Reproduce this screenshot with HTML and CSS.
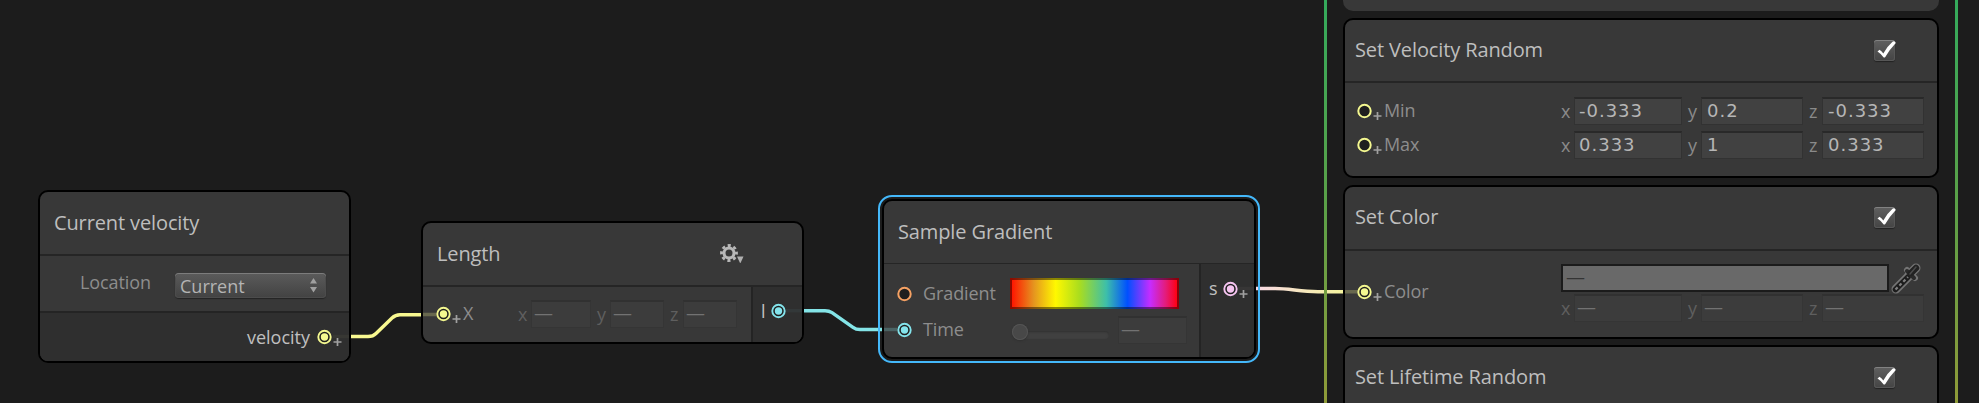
FILE: index.html
```
<!DOCTYPE html>
<html lang="en">
<head>
<meta charset="utf-8">
<title>VFX Graph</title>
<link rel="stylesheet" href="styles.css">
</head>
<body>
<svg class="defs" width="0" height="0">
  <defs>
    <symbol id="ring" viewBox="0 0 15 20"><circle cx="7.5" cy="10" r="6.2" fill="#1f1f1f" stroke="currentColor" stroke-width="2"/></symbol>
    <symbol id="ring-on" viewBox="0 0 15 20"><circle cx="7.5" cy="10" r="6.2" fill="#1f1f1f" stroke="currentColor" stroke-width="1.9"/><circle cx="7.5" cy="10" r="3.7" fill="currentColor"/></symbol>
    <symbol id="plus" viewBox="0 0 9 20"><path d="M0.5 15H8.5M4.5 11V19" stroke="#a0a0a0" stroke-width="1.7"/></symbol>
    <symbol id="check" viewBox="0 0 24 24"><path d="M3.500 11.500L5.500 9.800Q8 11.600 9.300 13.500Q13 6.500 18.500 1.700Q21 .6 21.800 3Q16 9 11.300 17Q10.300 18 9.200 17Q7 13.800 3.500 11.500Z" fill="#fff"/></symbol>
  </defs>
</svg>

<main class="canvas">
  <svg class="edges" width="1979" height="403" fill="none" stroke-width="3.4">
    <defs>
      <linearGradient id="mix" gradientUnits="userSpaceOnUse" x1="1256" y1="0" x2="1345" y2="0">
        <stop offset="0" stop-color="#f8d8e4"/><stop offset="1" stop-color="#f4f49c"/>
      </linearGradient>
    </defs>
    <path stroke="#f8f890" d="M350 336.5H368Q373 336.5 376 333.5L392 318Q395.500 314.700 400 314.700H422"/>
    <path stroke="#84e4e7" d="M803 310.700H825Q829 310.700 832 312.700L853 327.300Q856 329.500 860 329.500H882"/>
    <path stroke="url(#mix)" d="M1255 288.500H1275C1290 288.500 1300 291.700 1318 291.700H1344"/>
  </svg>

  <section class="node velocity">
    <h2>Current velocity</h2>
    <div class="row setting">
      <span class="label">Location</span>
      <div class="select">Current
        <svg width="9" height="15" viewBox="0 0 9 15"><path d="M4.500 0L8 5.500H1ZM1 9H8L4.500 14.500Z" fill="#a0a0a0"/></svg>
      </div>
    </div>
    <div class="row output wide">
      <span>velocity</span>
      <span class="port yellow"><svg class="ring"><use href="#ring-on"/></svg><svg class="plus"><use href="#plus"/></svg></span>
    </div>
  </section>

  <section class="node length">
    <h2>Length
      <svg class="gear" width="24" height="20" viewBox="0 0 24 20">
        <circle cx="9" cy="9" r="5" fill="none" stroke="#b8b8b8" stroke-width="3"/>
        <circle cx="9" cy="9" r="7.500" fill="none" stroke="#b8b8b8" stroke-width="2.800" stroke-dasharray="3.100 2.790" stroke-dashoffset="1.550"/>
        <path d="M17 12.500H23.500L20.500 19H20Z" fill="#b0b0b0"/>
      </svg>
    </h2>
    <div class="body">
      <div class="inputs row">
        <span class="port yellow"><svg class="ring"><use href="#ring-on"/></svg><svg class="plus"><use href="#plus"/></svg></span>
        <span class="label grow">X</span>
        <div class="vector small off"><i>x</i><b>—</b><i>y</i><b>—</b><i>z</i><b>—</b></div>
      </div>
      <div class="output row">
        <span>l</span>
        <span class="port cyan"><svg class="ring"><use href="#ring-on"/></svg></span>
      </div>
    </div>
  </section>

  <section class="node gradient selected">
    <h2>Sample Gradient</h2>
    <div class="body">
      <div class="inputs">
        <div class="row first">
          <span class="port orange"><svg class="ring"><use href="#ring"/></svg></span>
          <span class="label grow">Gradient</span>
          <div class="ramp"></div>
        </div>
        <div class="row second">
          <span class="port cyan"><svg class="ring"><use href="#ring-on"/></svg></span>
          <span class="label grow">Time</span>
          <div class="slider"><div class="track"></div><div class="knob"></div></div>
          <div class="vector off single"><b>—</b></div>
        </div>
      </div>
      <div class="output row">
        <span>s</span>
        <span class="port pink"><svg class="ring"><use href="#ring-on"/></svg><svg class="plus"><use href="#plus"/></svg></span>
      </div>
    </div>
  </section>

  <section class="context">
    <div class="block previous"></div>
    <div class="block random">
      <h2>Set Velocity Random<span class="check"><svg width="24" height="24"><use href="#check"/></svg></span></h2>
      <div class="row">
        <span class="port yellow"><svg class="ring"><use href="#ring"/></svg><svg class="plus"><use href="#plus"/></svg></span>
        <span class="label grow">Min</span>
        <div class="vector"><i>x</i><b>-0.333</b><i>y</i><b>0.2</b><i>z</i><b>-0.333</b></div>
      </div>
      <div class="row">
        <span class="port yellow"><svg class="ring"><use href="#ring"/></svg><svg class="plus"><use href="#plus"/></svg></span>
        <span class="label grow">Max</span>
        <div class="vector"><i>x</i><b>0.333</b><i>y</i><b>1</b><i>z</i><b>0.333</b></div>
      </div>
    </div>
    <div class="block color">
      <h2>Set Color<span class="check"><svg width="24" height="24"><use href="#check"/></svg></span></h2>
      <div class="row">
        <span class="port yellow"><svg class="ring"><use href="#ring-on"/></svg><svg class="plus"><use href="#plus"/></svg></span>
        <span class="label grow">Color</span>
        <div class="picker">
          <div class="swatch-row">
            <div class="swatch">—</div>
            <svg width="33" height="32" viewBox="0 0 33 32">
              <g stroke-linecap="round" fill="none">
                <path d="M6 26L19 13M19 12L26 5" stroke="#747474" stroke-width="9"/>
                <path d="M17 7L25 15" stroke="#747474" stroke-width="6"/>
                <path d="M5.500 26.500L18 14" stroke="#1c1c1c" stroke-width="5.500"/>
                <path d="M5.500 26.500L18 14" stroke="#808080" stroke-width="2.200" stroke-dasharray="3 2.500" stroke-linecap="butt"/>
                <path d="M17 8L24 15" stroke="#2a2a2a" stroke-width="4"/>
                <path d="M21 10L26 5" stroke="#222" stroke-width="6.500"/>
                <path d="M20 11L26 4" stroke="#4c4c4c" stroke-width="1.500"/>
              </g>
            </svg>
          </div>
          <div class="vector off"><i>x</i><b>—</b><i>y</i><b>—</b><i>z</i><b>—</b></div>
        </div>
      </div>
    </div>
    <div class="block lifetime">
      <h2>Set Lifetime Random<span class="check"><svg width="24" height="24"><use href="#check"/></svg></span></h2>
    </div>
  </section>

  <svg class="edges" width="1979" height="403" stroke-width="3.400">
    <path stroke="#f8f890" opacity=".04" d="M333 336.500H349"/>
    <path stroke="#f8f890" opacity=".25" d="M423 314.500H436.500M1345 291.700H1358"/>
    <path stroke="#84e4e7" opacity=".25" d="M884 329.500H897"/>
    <path stroke="#84e4e7" opacity=".05" d="M786 310.700H802"/>
    <path stroke="#f8d8e4" opacity=".04" d="M1238 288.500H1254"/>
  </svg>
</main>
</body>
</html>
```
FILE: styles.css
```
* { box-sizing: border-box; }

body {
  margin: 0;
  background: #1c1c1c;
  color: #bdbdbd;
  font: 18px/26px "Open Sans", "Noto Sans", sans-serif;
}

.defs { position: absolute; }

.canvas {
  position: relative;
  width: 1979px;
  height: 403px;
  overflow: hidden;
}

.edges { position: absolute; left: 0; top: 0; }

/* Nodes placed on the free canvas */
.node, .block {
  border: 2px solid #000;
  border-radius: 10px;
  background: #383838;
}

.node { position: absolute; display: flex; flex-direction: column; }
.velocity { left: 38px; top: 190px; width: 313px; height: 173px; }
.length { left: 421px; top: 221px; width: 383px; height: 123px; }
.gradient { left: 882px; top: 199px; width: 374px; height: 160px; }

.selected { outline: 2px solid #44b8fa; outline-offset: 2px; }

h2 {
  display: flex;
  align-items: center;
  justify-content: space-between;
  flex: none;
  height: 64px;
  margin: 0;
  padding: 0 0 0 14px;
  border-bottom: 2px solid #252525;
  color: #bebebe;
  font-size: 20px;
  font-weight: 400;
  letter-spacing: -0.12px;
}

.gradient h2 { height: 63px; border-bottom-width: 1px; }

.gear { margin: 0 58px 1px 0; }

.row { display: flex; align-items: center; }
.label { color: #8d8d8d; letter-spacing: -0.1px; }
.grow { flex: 1; }

.body { display: flex; flex: 1; }
.inputs { flex: 1; padding: 0 14px 0 13px; }

.output {
  background: #2f2f2f;
  border-left: 2px solid #242424;
  border-radius: 0 0 8px 0;
  color: #c0c0c0;
}

.output.wide {
  flex: 1;
  justify-content: flex-end;
  border-left: 0;
  border-top: 2px solid #242424;
  border-radius: 0 0 8px 8px;
  padding: 0 5px 1px 0;
}

/* Ports */
.port { display: flex; flex: none; height: 20px; }
.ring { width: 15px; height: 20px; }
.plus { width: 9px; height: 20px; margin: 0 2px 0 1px; }
.yellow { color: #f4f890; }
.cyan { color: #84e4ec; }
.orange { color: #f5a163; }
.pink { color: #f5c4f0; }

/* Current velocity */
.setting { height: 55px; padding: 0 23px 0 40px; justify-content: space-between; }
.setting .label { margin-bottom: 4px; }
.select {
  display: flex;
  align-items: center;
  justify-content: space-between;
  width: 151px;
  height: 25px;
  margin-top: 3px;
  padding: 1px 8px 0 5px;
  border-radius: 4px;
  background: linear-gradient(#5b5b5b, #424242);
  box-shadow: inset 0 1px #7c7c7c, inset 0 0 0 1px #4c4c4c, 0 1px 1px #242424;
  color: #b4b4b4;
}
.wide .port { margin-left: 7px; }

/* Length */
.length .inputs { padding-bottom: 1px; }
.length .label { margin-top: -2px; }
.length .output { width: 51px; padding: 0 0 8px 8px; gap: 5px; }

/* Sample Gradient */
.gradient .inputs { display: flex; flex-direction: column; padding: 14px 12px 0 13px; }
.gradient .label { margin-top: -1px; padding-left: 11px; }
.gradient .first { height: 31px; padding-right: 8px; }
.gradient .second { height: 41px; }
.gradient .output { width: 55px; align-items: flex-start; padding: 11px 0 0 8px; gap: 5px; }
.gradient .output .port { margin-top: 4px; }

.ramp {
  width: 169px;
  height: 31px;
  background: linear-gradient(90deg, #ff1400 1%, #e5941f 14%, #fff800 27%, #aadd1e 41%, #3dbfa9 57%, #0050ff 69.500%, #c62cff 83%, #e31c7c 92%, #ff0010 99%);
  box-shadow: inset 0 0 0 2px rgba(0, 0, 0, .45);
}

.slider { position: relative; width: 97px; height: 20px; margin-right: 9px; }
.track {
  height: 8px;
  margin: 11px 0 0 2px;
  border-radius: 4px;
  background: #404040;
  box-shadow: inset 0 1px 2px #303030;
}
.knob {
  position: absolute;
  left: 0;
  top: 4px;
  width: 16px;
  height: 16px;
  border-radius: 50%;
  background: #484848;
  box-shadow: inset 0 0 0 1px #545454, 0 1px 2px #303030;
}

/* Vector and number fields */
.vector { display: flex; height: 28px; }
.vector i {
  width: 19px;
  padding: 1px 0 0 6px;
  color: #8a8a8a;
  font-style: normal;
}
.vector i:first-child { width: 13px; padding-left: 0; }
.vector b {
  width: 102px;
  padding-left: 5px;
  border: 1px solid #323232;
  border-top: 2px solid #292929;
  background: #414141;
  color: #b6b6b6;
  font: 18px/23px "DejaVu Sans", sans-serif;
  letter-spacing: 1px;
}
.vector b:nth-child(2) { width: 108px; padding-left: 4px; }

.off i { color: #5f5f5f; }
.off b, .off b:nth-child(2) {
  padding-left: 2px;
  border-color: #353535;
  border-top-color: #313131;
  background: #3c3c3c;
  color: #727272;
  font: 19px/22px "Open Sans", sans-serif;
}
.small b, .small b:nth-child(2) { width: 54px; }
.small b:nth-child(2) { width: 60px; }
.single b { width: 69px; }

/* Context with its stacked blocks */
.context {
  position: absolute;
  left: 1324px;
  top: 0;
  width: 634px;
  height: 403px;
  padding: 0 19px;
  background:
    linear-gradient(#34aa5c, #5aa048 50%, #8f9a38) left / 3px 100% no-repeat,
    linear-gradient(#34aa5c, #5aa048 50%, #8f9a38) right / 3px 100% no-repeat;
}
.previous { height: 11px; border: 0; border-radius: 0 0 10px 10px; }
.random { height: 160px; margin-top: 7px; }
.color { height: 154px; margin-top: 7px; }
.lifetime { height: 80px; margin-top: 6px; }

.block h2 { padding: 0 42px 2px 10px; }
.block .row { height: 35px; padding: 0 13px 0 12px; }
.random h2 { height: 63px; padding-bottom: 1px; }
.random .row:nth-child(2) { height: 42px; padding-top: 14px; }
.random .row:nth-child(3) { height: 28px; margin-top: 6px; }
.random .label { margin-top: -2px; }
.color .row { height: 86px; align-items: center; padding-bottom: 4px; }
.color .label { margin-top: -2px; }

.check {
  display: block;
  width: 21px;
  height: 21px;
  border-radius: 3px;
  background: linear-gradient(#606060, #444);
  box-shadow: inset 0 1px #828282, inset 0 0 0 1px #575757, 0 1px 1px #222;
}
.check svg { display: block; }

.picker { width: 363px; }
.swatch-row { display: flex; height: 31px; }
.swatch {
  width: 328px;
  height: 28px;
  margin: 1px 1px 0 0;
  padding-left: 3px;
  border: 2px solid #1b1b1b;
  background: #696969;
  color: #343434;
  font-size: 19px;
  line-height: 23px;
}
```
